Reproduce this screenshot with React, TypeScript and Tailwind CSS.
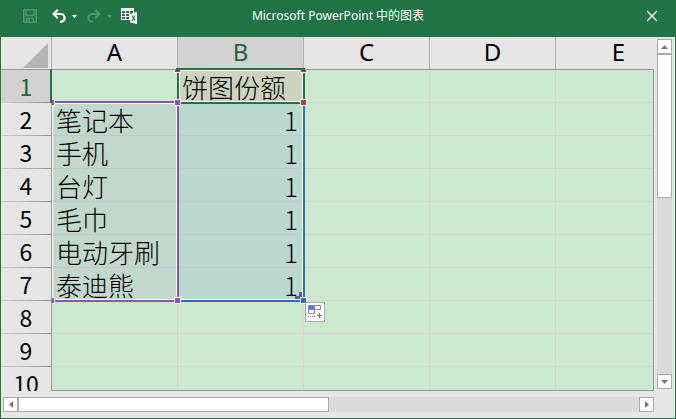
import React from 'react';
import clsx from 'clsx';

const columns = ['A', 'B', 'C', 'D', 'E'];

const rows: string[][] = [
  ['', '饼图份额'],
  ['笔记本', '1'],
  ['手机', '1'],
  ['台灯', '1'],
  ['毛巾', '1'],
  ['电动牙刷', '1'],
  ['泰迪熊', '1'],
  [],
  [],
  [],
];

const Caret = () => (
  <svg width="5" height="3" viewBox="0 0 5 3" fill="currentColor" aria-hidden="true">
    <path d="M0 0h5L2.5 3z" />
  </svg>
);

const TitleBar = () => (
  <header className="grid h-[37px] shrink-0 grid-cols-[1fr_auto_1fr] items-center bg-[#217346] pb-[5px] text-white">
    <div className="flex items-center pl-[22px]">
      <button aria-label="保存" className="mr-[15px] text-[#4f9370]" disabled>
        <svg width="14" height="14" viewBox="0 0 14 14" fill="none" stroke="currentColor" strokeWidth="1.5">
          <path d="M.75.75h12.5v12.5H.75z" />
          <path d="M3 1v5.5h8V1M3.5 13V9.5h7V13" />
          <path d="M6 10v3" />
        </svg>
      </button>
      <button aria-label="撤消" className="mr-2.5 flex items-center gap-1.5">
        <svg width="14" height="14" viewBox="0 0 14 14" fill="none" stroke="currentColor" strokeWidth="2.2">
          <path d="M5.8.8 1.6 5l4.2 4.2M2 5h6.8c5 0 5.4 7.6-.8 7.8" />
        </svg>
        <Caret />
      </button>
      <button aria-label="恢复" className="mr-[9px] flex items-center gap-1.5 text-[#4f9370]" disabled>
        <svg width="14" height="14" viewBox="0 0 14 14" fill="none" stroke="currentColor" strokeWidth="2">
          <path d="M8.2.8 12.4 5 8.2 9.2M12 5H5.2c-5 0-5.4 7.6.8 7.8" />
        </svg>
        <Caret />
      </button>
      <button aria-label="在 Microsoft Excel 中编辑数据">
        <svg width="17" height="16" viewBox="0 0 17 16" fill="none">
          <path fill="#fff" d="M0 0h13v5H9v7H0z" />
          <path fill="#217346" d="M1 3h3v2H1zM5 3h3v2H5zM9 3h3v2H9zM1 6h3v2H1zM5 6h3v2H5zM1 9h3v2H1zM5 9h3v2H5z" />
          <path fill="#fff" d="m9 6 7-2v12l-7-1.5z" />
          <path stroke="#217346" strokeWidth="1.1" d="m11 7.5 3 5.5M14 7.5 11 13" />
        </svg>
      </button>
    </div>
    <h1 className="text-[12px] leading-5">Microsoft PowerPoint 中的图表</h1>
    <button aria-label="关闭" className="mr-[17px] justify-self-end">
      <svg width="12" height="12" viewBox="0 0 12 12" stroke="currentColor" strokeWidth="1.2">
        <path d="m1 1 10 10M11 1 1 11" />
      </svg>
    </button>
  </header>
);

const SheetTable = () => (
  <table className="w-[681px] table-fixed border-separate border-spacing-0 text-black">
    <thead>
      <tr className="h-[33px]">
        <th className="w-[51px] border-r border-b border-r-[#b1b1b1] border-b-[#999] p-0">
          <svg className="mt-1 ml-[22px]" width="25" height="25" viewBox="0 0 25 25" fill="#b4b4b4" aria-hidden="true">
            <path d="M25 0v25H0z" />
          </svg>
        </th>
        {columns.map((name) => (
          <th
            key={name}
            scope="col"
            className={clsx(
              'w-[126px] border-r border-b border-r-[#b1b1b1] border-b-[#999] p-0 pb-0.5 text-2xl leading-[30px] font-normal',
              name === 'B' && 'bg-[#d2d2d2] text-[#1f6540]'
            )}
          >
            {name}
          </th>
        ))}
      </tr>
    </thead>
    <tbody>
      {rows.map((row, r) => (
        <tr key={r} className="h-[33px]">
          <th
            scope="row"
            className={clsx(
              'border-r border-[#999] bg-[linear-gradient(to_right,#d0d0d0,#909090)] bg-[length:100%_1px] bg-bottom bg-no-repeat p-0 pb-0.5 font-["Noto_Sans_CJK_SC",sans-serif] text-[23px] leading-[30px] font-normal',
              r === 0 && 'bg-[#d2d2d2] text-[#1f6540]'
            )}
          >
            {r + 1}
          </th>
          {columns.map((name, c) => {
            const selected = c < 2 && r > 0 && r < 7;
            return (
              <td
                key={name}
                className={clsx(
                  'border-r border-b p-0 pt-0.5 pr-[5px] pl-1 font-["Noto_Sans_CJK_SC",sans-serif] text-[26px] leading-[30px] font-light whitespace-nowrap',
                  selected ? 'border-[#c3c8cc]' : 'border-[#d3d5d3]',
                  selected && c === 0 && 'bg-[#c2d8cd]',
                  selected && c === 1 && 'bg-[#bbd9ce] text-right',
                  r === 0 && c === 1 && 'bg-[#cdd4bd]'
                )}
              >
                {row[c]}
              </td>
            );
          })}
        </tr>
      ))}
    </tbody>
  </table>
);

const Handle = ({ className }: { className: string }) => (
  <div className={clsx('absolute size-[7px] border border-white', className)} />
);

// Coloured frames around the chart's series name, categories and values
const RangeFrames = () => (
  <>
    <div className="pointer-events-none absolute top-[33px] right-0 bottom-0 left-[51px] overflow-hidden">
      <div className="absolute top-[31px] left-0 h-[201px] w-[127px] border-y-2 border-r-2 border-[#8458b8]">
        <div className="h-full border border-white" />
      </div>
      <div className="absolute top-[34px] left-[127px] h-[198px] w-[126px] border-r-2 border-b-2 border-[#2f69c8]">
        <div className="h-full border-r border-b border-white" />
      </div>
      <div className="absolute top-0 left-[125px] h-[34px] w-[128px] border-x-2 border-b-2 border-[#217346]">
        <div className="h-full border border-white" />
      </div>
      <svg className="absolute top-[222px] left-[243px]" width="7" height="7" viewBox="0 0 7 7" fill="#4c5fb8">
        <path d="M4 0h3v7H0V4h4z" />
      </svg>
      <Handle className="-top-1 left-[122px] bg-[#c0303c]" />
      <Handle className="-top-1 left-[248px] bg-[#c0303c]" />
      <Handle className="top-[29px] left-[248px] bg-[#c0303c]" />
      <Handle className="top-[29px] -left-1 bg-[#8458b8]" />
      <Handle className="top-[29px] left-[122px] bg-[#8458b8]" />
      <Handle className="top-[227px] -left-1 bg-[#8458b8]" />
      <Handle className="top-[227px] left-[122px] bg-[#8458b8]" />
      <Handle className="top-[227px] left-[248px] bg-[#2f69c8]" />
    </div>
    <button
      aria-label="快速分析"
      className="absolute top-[265px] left-[304px] size-5 border border-[#ababab] bg-white"
    >
      <svg width="18" height="18" viewBox="0 0 18 18" fill="none">
        <path fill="#3d7dff" d="M3 3h5v4H3z" />
        <path stroke="#8c8c8c" d="M2.5 2.5h12v4h-12zM8.5 2.5v8h-6v-4" />
        <path stroke="#777" strokeDasharray="1 1" d="M2 13.5h7" />
        <path stroke="#777" d="M11 12.5h5M13.5 10v5" />
      </svg>
    </button>
  </>
);

const scrollButton = 'flex size-[15px] shrink-0 items-center justify-center border border-[#ababab] bg-white text-[#777]';

const App: React.FC = () => {
  return (
    <div className="flex h-screen flex-col overflow-hidden bg-[#217346] px-px pb-px font-['Noto_Sans','Noto_Sans_CJK_SC',sans-serif]">
      <TitleBar />
      <main className="flex min-h-0 flex-1 flex-col gap-1.5 bg-[#e6e6e6] pb-1.5">
        <div className="flex min-h-0 flex-1 gap-[3px] pr-[3px]">
          <div className="relative min-w-0 flex-1 overflow-hidden">
            <div className="absolute top-[33px] right-0 bottom-0 left-[51px] bg-[#cce8cf]" />
            <div className="relative">
              <SheetTable />
            </div>
            <div className="absolute top-8 right-0 bottom-0 left-[50px] border border-[#999]" />
            {/* green edges of the active cell's column and row headers */}
            <div className="absolute top-[31px] left-[175px] h-0.5 w-[129px] bg-[#217346]" />
            <div className="absolute top-8 left-[49px] h-[34px] w-0.5 bg-[#217346]" />
            <RangeFrames />
          </div>
          <div className="my-0.5 flex w-[15px] flex-col">
            <button aria-label="向上滚动" className={scrollButton}>
              <svg width="7" height="4" viewBox="0 0 7 4" fill="currentColor"><path d="M3.5 0 7 4H0z" /></svg>
            </button>
            <div className="flex-1 bg-[#dadada]">
              <div className="h-[45%] border border-[#ababab] bg-white" />
            </div>
            <button aria-label="向下滚动" className={scrollButton}>
              <svg width="7" height="4" viewBox="0 0 7 4" fill="currentColor"><path d="M3.5 4 7 0H0z" /></svg>
            </button>
          </div>
        </div>
        <div className="mr-[21px] ml-0.5 flex">
          <button aria-label="向左滚动" className={scrollButton}>
            <svg width="4" height="7" viewBox="0 0 4 7" fill="currentColor"><path d="M0 3.5 4 0v7z" /></svg>
          </button>
          <div className="flex-1 bg-[#dadada]">
            <div className="h-full w-1/2 border border-[#ababab] bg-white" />
          </div>
          <button aria-label="向右滚动" className={scrollButton}>
            <svg width="4" height="7" viewBox="0 0 4 7" fill="currentColor"><path d="M4 3.5 0 0v7z" /></svg>
          </button>
        </div>
      </main>
    </div>
  );
};

export default App;
